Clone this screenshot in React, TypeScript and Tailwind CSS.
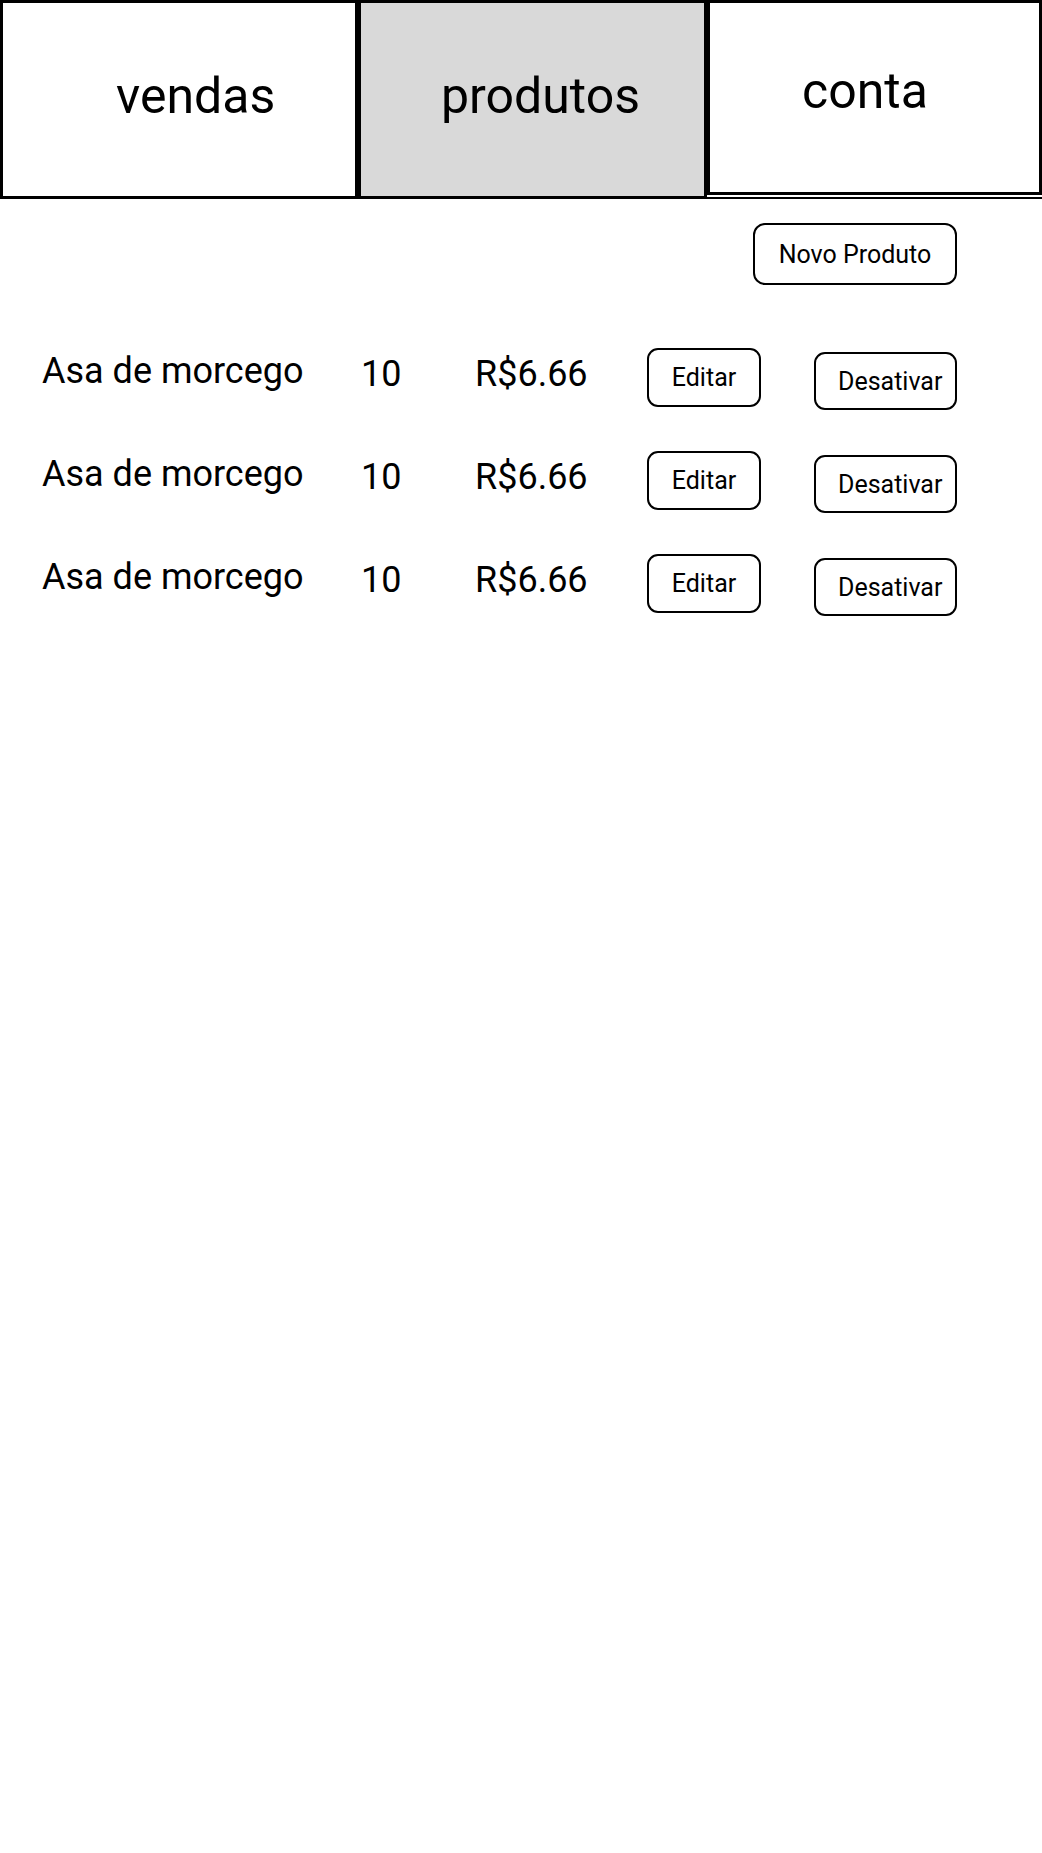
import React from 'react';

const produtos = [
    { id: 1, nome: 'Asa de morcego', qtd: 10, preco: 'R$6.66' },
    { id: 2, nome: 'Asa de morcego', qtd: 10, preco: 'R$6.66' },
    { id: 3, nome: 'Asa de morcego', qtd: 10, preco: 'R$6.66' },
];

const Tabs = () => (
    <div className="flex items-start">
        <div className="w-[358px] h-[199px] border-[3px] border-black bg-white pl-[113px] pt-[68px]">
            <span className="block text-[50px] leading-[50px]">vendas</span>
        </div>
        <div className="w-[349px] h-[199px] border-[3px] border-black bg-[#d9d9d9] pl-[80px] pt-[68px]">
            <span className="block text-[50px] leading-[50px]">produtos</span>
        </div>
        <div className="w-[335px] flex flex-col">
            <div className="h-[195px] border-[3px] border-black bg-white pl-[92px] pt-[63px]">
                <span className="block text-[50px] leading-[50px]">conta</span>
            </div>
            <div className="mt-[2px] h-[2px] bg-black" />
        </div>
    </div>
);

const ProdutoRow = ({ nome, qtd, preco }: { nome: string; qtd: number; preco: string }) => (
    <div className="flex items-start h-[103px]">
        <div className="w-[319px] mt-[5px] text-[36px] leading-[36px]">{nome}</div>
        <div className="w-[114px] mt-[8px] text-[36px] leading-[36px]">{qtd}</div>
        <div className="w-[172px] mt-[8px] text-[36px] leading-[36px]">{preco}</div>
        <button className="w-[114px] h-[59px] border-2 border-black rounded-[11px] flex items-center justify-center text-[25px] leading-[25px]">
            Editar
        </button>
        <button className="ml-[53px] mt-[4px] w-[143px] h-[58px] border-2 border-black rounded-[11px] flex items-center justify-start pl-[22px] text-[25px] leading-[25px]">
            Desativar
        </button>
    </div>
);

export default function App() {
    return (
        <div className="min-h-[1853px] w-[1042px] bg-white text-black" style={{ fontFamily: 'Roboto, "Noto Sans", sans-serif' }}>
            <Tabs />

            <div className="mt-[24px] pl-[753px]">
                <button className="w-[204px] h-[62px] border-2 border-black rounded-[12px] flex items-center justify-center text-[25px] leading-[25px]">
                    Novo Produto
                </button>
            </div>

            {/* lista de produtos */}
            <div className="mt-[63px] pl-[42px] flex flex-col">
                {produtos.map(p => (
                    <ProdutoRow key={p.id} nome={p.nome} qtd={p.qtd} preco={p.preco} />
                ))}
            </div>
        </div>
    );
}
